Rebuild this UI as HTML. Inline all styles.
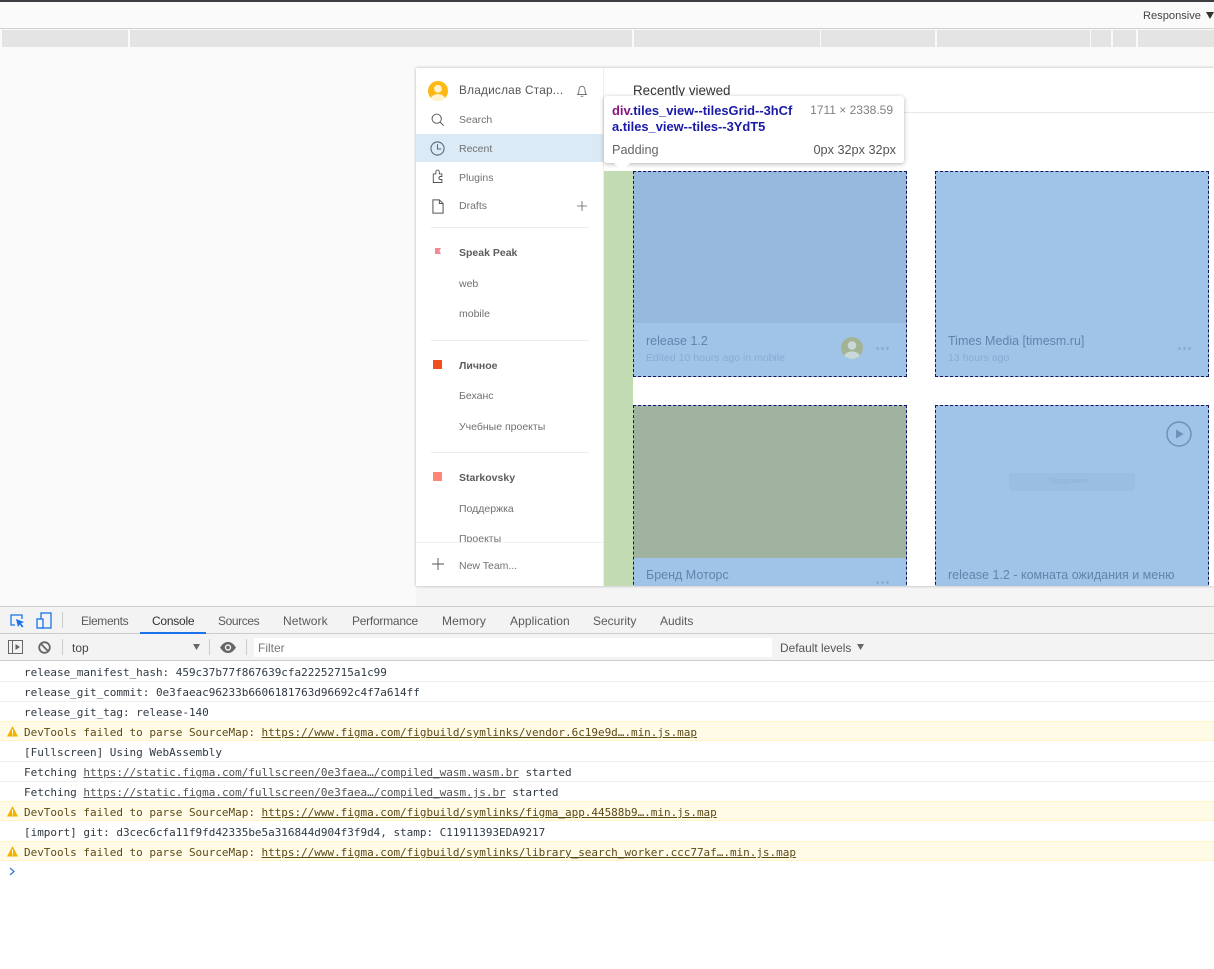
<!DOCTYPE html>
<html><head><meta charset="utf-8"><style>
html,body{margin:0;padding:0;width:1214px;height:969px;overflow:hidden;background:#fff;font-family:"Liberation Sans",sans-serif}
div,span.t,svg{position:absolute}
.t{position:absolute;white-space:nowrap;line-height:16px;height:16px}
.s{font-size:10.5px;color:#717171;left:43px;margin-top:1px}
.b{font-weight:bold;color:#5c5c5c}
.tab{font-size:12px;color:#5a5a5a;top:613px}
.r{left:0;width:1214px;height:19px;border-bottom:1px solid #f0f0f0;background:#fff}
.r .t{left:24px;top:3px;font:11px/16px "DejaVu Sans Mono","Liberation Mono",monospace;letter-spacing:-.025px;color:#303942}
.w{background:#fffbe6;border-bottom:1px solid #fff5c2;border-top:1px solid #fff5c2;height:18px}
.w .t{color:#5c4a1a;top:3px}
u{color:#545454}.w u{color:#5c4a1a}
.m{background:#e4e4e4;top:30px;height:17px}
.ttl{font-size:12.5px;color:#6184ab}
.sub{font-size:10.5px;color:#88abd2}
.d{border:1px dashed #14145a;box-sizing:border-box;background:#a0c4e8;width:274px}
.dots{width:14px;height:3px}
.dots i{position:absolute;width:3px;height:3px;border-radius:50%;background:#8badd4;top:0}
.dots i:nth-child(2){left:5px}.dots i:nth-child(3){left:10px}
</style></head><body>
<div style="left:0;top:0;width:1214px;height:606px;background:#fafafa"></div>
<div style="left:416px;top:586px;width:798px;height:20px;background:#f5f5f5"></div>
<div style="left:0;top:0;width:1214px;height:2px;background:#3e3e42"></div>
<div style="left:0;top:28px;width:1214px;height:1px;background:#cfcfcf"></div>
<span class="t" style="left:1143px;top:8px;font-size:11.1px;color:#444">Responsive</span>
<svg style="left:1206px;top:12px" width="8" height="7"><path d="M0 0H8L4 7Z" fill="#333"/></svg>
<div class="m" style="left:2px;width:126px"></div>
<div class="m" style="left:130px;width:502px"></div>
<div class="m" style="left:634px;width:186px"></div>
<div class="m" style="left:821px;width:114px"></div>
<div class="m" style="left:937px;width:153px"></div>
<div class="m" style="left:1091px;width:20px"></div>
<div class="m" style="left:1113px;width:23px"></div>
<div class="m" style="left:1138px;width:76px"></div>

<div style="left:416px;top:68px;width:798px;height:518px;background:#fff;box-shadow:0 0 3px rgba(0,0,0,.28);overflow:hidden">
  <!-- sidebar (origin 416,68) -->
  <div style="left:187px;top:0;width:1px;height:518px;background:#eee"></div>
  <div style="left:0;top:66px;width:187px;height:28px;background:#daeaf7"></div>
  <svg style="left:12px;top:13px" width="20" height="20" viewBox="0 0 22 22"><defs><clipPath id="c1"><circle cx="11" cy="11" r="11"/></clipPath></defs><circle cx="11" cy="11" r="11" fill="#fdb813"/><g clip-path="url(#c1)"><circle cx="11" cy="8.5" r="4.300" fill="#fff3d0"/><ellipse cx="11" cy="20" rx="8" ry="5.500" fill="#fff3d0"/></g></svg>
  <span class="t" style="left:43px;top:14px;font-size:11.8px;color:#555;letter-spacing:.23px">Владислав Стар...</span>
  <svg style="left:159px;top:16px" width="14" height="14" viewBox="0 0 16 16" fill="none" stroke="#666"><path d="M3 12c1-1 1.500-2 1.500-4.500C4.500 4.500 6 2.500 8 2.500s3.500 2 3.500 5c0 2.500.5 3.500 1.500 4.500Z"/><path d="M6.500 14h3"/></svg>
  <svg style="left:15px;top:45px" width="14" height="14" viewBox="0 0 16 16" fill="none" stroke="#555" stroke-width="1.100"><circle cx="6.500" cy="6.500" r="5.300"/><path d="M10.300 10.300L14.500 14.500"/></svg>
  <span class="t s" style="top:43px">Search</span>
  <svg style="left:14px;top:73px" width="15" height="15" viewBox="0 0 16 16" fill="none" stroke="#5a6670" stroke-width="1.100"><circle cx="8" cy="8" r="7"/><path d="M8 3.500V8.500H12"/></svg>
  <span class="t s" style="top:72px">Recent</span>
  <svg style="left:16px;top:101px" width="12" height="15" viewBox="0 0 14 17" fill="none" stroke="#555" stroke-width="1.100"><path d="M1.500 15.500V5.500H4.500V3a2 2 0 0 1 4 0V5.500H11.500V8.500H9.500a1.800 1.800 0 0 0 0 3.500H11.500V15.500Z"/></svg>
  <span class="t s" style="top:101px">Plugins</span>
  <svg style="left:16px;top:131px" width="12" height="15" viewBox="0 0 13 16" fill="none" stroke="#555" stroke-width="1.100"><path d="M1 .8H8L12 4.800V15.200H1Z"/><path d="M8 .8V4.800H12"/></svg>
  <span class="t s" style="top:129px">Drafts</span>
  <svg style="left:161px;top:133px" width="10" height="10" viewBox="0 0 12 12" stroke="#666"><path d="M6 0V12M0 6H12"/></svg>
  <div style="left:15px;top:159px;width:158px;height:1px;background:#ececec"></div>

  <svg style="left:19px;top:180px" width="6" height="6" viewBox="0 0 6 6"><path d="M0 0H6L4.500 3L6 6H0Z" fill="#f08a96"/></svg>
  <span class="t s b" style="top:176px">Speak Peak</span>
  <span class="t s" style="top:207px">web</span>
  <span class="t s" style="top:237px">mobile</span>
  <div style="left:15px;top:272px;width:158px;height:1px;background:#ececec"></div>

  <div style="left:17px;top:292px;width:9px;height:9px;background:#f24e1e"></div>
  <span class="t s b" style="top:289px">Личное</span>
  <span class="t s" style="top:319px">Беханс</span>
  <span class="t s" style="top:350px">Учебные проекты</span>
  <div style="left:15px;top:384px;width:158px;height:1px;background:#ececec"></div>

  <div style="left:17px;top:404px;width:9px;height:9px;background:#ff8577"></div>
  <span class="t s b" style="top:401px">Starkovsky</span>
  <span class="t s" style="top:432px">Поддержка</span>
  <span class="t s" style="top:462px">Проекты</span>
  <div style="left:0;top:474px;width:187px;height:44px;background:#fff;border-top:1px solid #f0f0f0"></div>
  <svg style="left:16px;top:490px" width="12" height="12" viewBox="0 0 13 13" stroke="#555"><path d="M6.500 0V13M0 6.500H13"/></svg>
  <span class="t s" style="top:489px">New Team...</span>

  <!-- main -->
  <span class="t" style="left:217px;top:15px;font-size:13.4px;color:#333">Recently viewed</span>
  <div style="left:188px;top:44px;width:610px;height:1px;background:#e8e8e8"></div>
  <div style="left:188px;top:103px;width:29px;height:415px;background:#c3dbb3"></div>

  <div class="d" style="left:217px;top:103px;height:206px">
    <div style="left:0;top:0;width:272px;height:151px;background:#97b9dd"></div>
    <span class="t ttl" style="left:12px;top:161px">release 1.2</span>
    <span class="t sub" style="left:12px;top:178px">Edited 10 hours ago in mobile</span>
    <svg style="left:207px;top:165px" width="22" height="22" viewBox="0 0 22 22"><defs><clipPath id="c2"><circle cx="11" cy="11" r="11"/></clipPath></defs><circle cx="11" cy="11" r="11" fill="#a3b494"/><g clip-path="url(#c2)"><circle cx="11" cy="8.500" r="4.300" fill="#c9d8d8"/><ellipse cx="11" cy="20" rx="8" ry="5.500" fill="#c9d8d8"/></g></svg>
    <div class="dots" style="left:242px;top:175px"><i></i><i></i><i></i></div>
  </div>
  <div class="d" style="left:519px;top:103px;height:206px">
    <span class="t ttl" style="left:12px;top:161px">Times Media [timesm.ru]</span>
    <span class="t sub" style="left:12px;top:178px">13 hours ago</span>
    <div class="dots" style="left:242px;top:175px"><i></i><i></i><i></i></div>
  </div>
  <div class="d" style="left:217px;top:337px;height:200px">
    <div style="left:0;top:0;width:272px;height:152px;background:#a0b2a0"></div>
    <span class="t ttl" style="left:12px;top:161px">Бренд Моторс</span>
    <div class="dots" style="left:242px;top:175px"><i></i><i></i><i></i></div>
  </div>
  <div class="d" style="left:519px;top:337px;height:200px">
    <svg style="left:230px;top:15px" width="26" height="26" viewBox="0 0 26 26"><circle cx="13" cy="13" r="12" fill="none" stroke="#6f90b8" stroke-width="1.500"/><path d="M10 8.500L17.500 13L10 17.500Z" fill="#6f90b8"/></svg>
    <div style="left:73px;top:67px;width:126px;height:18px;background:#9abde2;border-radius:2px"></div>
    <span class="t" style="left:113px;top:68px;font-size:7px;color:#8fb2d8">Продолжить</span>
    <span class="t ttl" style="left:12px;top:161px">release 1.2 - комната ожидания и меню</span>
  </div>
</div>

<!-- tooltip -->
<div style="left:604px;top:96px;width:300px;height:67px;background:#fff;border-radius:3px;box-shadow:0 1px 5px rgba(0,0,0,.3)">
  <span class="t" style="left:8px;top:7px;font-size:12.9px;font-weight:bold;color:#881280">div<span style="color:#1a1aa6">.tiles_view--tilesGrid--3hCf</span></span>
  <span class="t" style="left:8px;top:23px;font-size:12.9px;font-weight:bold;color:#1a1aa6">a.tiles_view--tiles--3YdT5</span>
  <span class="t" style="right:11px;top:6px;font-size:12px;color:#808080">1711 × 2338.59</span>
  <span class="t" style="left:8px;top:46px;font-size:12.7px;color:#666">Padding</span>
  <span class="t" style="right:8px;top:46px;font-size:12.7px;color:#555">0px 32px 32px</span>
</div>
<svg style="left:612px;top:163px" width="20" height="9"><path d="M2 0H18L10 8Z" fill="#fff"/></svg>

<!-- devtools -->
<div style="left:0;top:606px;width:1214px;height:1px;background:#ccc"></div>
<div style="left:0;top:607px;width:1214px;height:26px;background:#f3f3f3"></div>
<div style="left:0;top:633px;width:1214px;height:1px;background:#ccc"></div>
<div style="left:0;top:634px;width:1214px;height:26px;background:#f3f3f3"></div>
<div style="left:0;top:660px;width:1214px;height:1px;background:#ccc"></div>
<svg style="left:9px;top:612px" width="17" height="17" viewBox="0 0 17 17" fill="none"><path d="M6 13H2V3H13V7" stroke="#1a73e8" stroke-width="1.300"/><path d="M7 7L15 10L12 11.500L14.500 14.500L13 15.500L10.800 12.500L9 15Z" fill="#1a73e8"/></svg>
<svg style="left:35px;top:612px" width="18" height="18" viewBox="0 0 18 18" fill="none" stroke="#1a73e8" stroke-width="1.300"><rect x="6" y="1" width="10" height="15"/><rect x="2" y="7" width="6" height="9" fill="#f3f3f3"/></svg>
<div style="left:62px;top:612px;width:1px;height:16px;background:#ccc"></div>
<span class="t tab" style="left:81px;letter-spacing:-.35px">Elements</span>
<span class="t tab" style="left:152px;color:#333;letter-spacing:-.25px">Console</span>
<span class="t tab" style="left:218px;letter-spacing:-.4px">Sources</span>
<span class="t tab" style="left:283px;letter-spacing:.1px">Network</span>
<span class="t tab" style="left:352px;letter-spacing:-.25px">Performance</span>
<span class="t tab" style="left:442px;letter-spacing:.1px">Memory</span>
<span class="t tab" style="left:510px;letter-spacing:.1px">Application</span>
<span class="t tab" style="left:593px">Security</span>
<span class="t tab" style="left:660px">Audits</span>
<div style="left:140px;top:632px;width:66px;height:2px;background:#1a73e8"></div>

<svg style="left:8px;top:640px" width="15" height="14" viewBox="0 0 15 14" fill="none" stroke="#666"><rect x=".5" y=".5" width="14" height="13"/><path d="M4.500 1V13"/><path d="M7.500 4L12 7L7.500 10Z" fill="#666" stroke="none"/></svg>
<svg style="left:38px;top:641px" width="13" height="13" viewBox="0 0 13 13" fill="none" stroke="#666" stroke-width="1.800"><circle cx="6.500" cy="6.500" r="5.300"/><path d="M2.800 2.800L10.200 10.200"/></svg>
<div style="left:62px;top:639px;width:1px;height:16px;background:#ccc"></div>
<span class="t" style="left:72px;top:640px;font-size:12px;color:#444">top</span>
<svg style="left:193px;top:644px" width="7" height="6"><path d="M0 0H7L3.500 6Z" fill="#666"/></svg>
<div style="left:209px;top:639px;width:1px;height:16px;background:#ccc"></div>
<svg style="left:220px;top:642px" width="16" height="11" viewBox="0 0 16 11"><path d="M0 5.500C3 1 5.500 0 8 0s5 1 8 5.500C13 10 10.500 11 8 11S3 10 0 5.500Z" fill="#666"/><circle cx="8" cy="5.500" r="3.200" fill="#f3f3f3"/><circle cx="8" cy="5.500" r="1.800" fill="#666"/></svg>
<div style="left:246px;top:639px;width:1px;height:16px;background:#ccc"></div>
<div style="left:254px;top:638px;width:518px;height:19px;background:#fff"></div>
<span class="t" style="left:258px;top:640px;font-size:12px;color:#777">Filter</span>
<span class="t" style="left:780px;top:640px;font-size:11.9px;color:#555">Default levels</span>
<svg style="left:857px;top:644px" width="7" height="6"><path d="M0 0H7L3.500 6Z" fill="#666"/></svg>

<div class="r" style="top:662px"><span class="t">release_manifest_hash: 459c37b77f867639cfa22252715a1c99</span></div>
<div class="r" style="top:682px"><span class="t">release_git_commit: 0e3faeac96233b6606181763d96692c4f7a614ff</span></div>
<div class="r" style="top:702px"><span class="t">release_git_tag: release-140</span></div>
<div class="r w" style="top:721px"><span class="t">DevTools failed to parse SourceMap: <u>https://www.figma.com/figbuild/symlinks/vendor.6c19e9d….min.js.map</u></span></div>
<div class="r" style="top:742px"><span class="t">[Fullscreen] Using WebAssembly</span></div>
<div class="r" style="top:762px"><span class="t">Fetching <u>https://static.figma.com/fullscreen/0e3faea…/compiled_wasm.wasm.br</u> started</span></div>
<div class="r" style="top:782px"><span class="t">Fetching <u>https://static.figma.com/fullscreen/0e3faea…/compiled_wasm.js.br</u> started</span></div>
<div class="r w" style="top:801px"><span class="t">DevTools failed to parse SourceMap: <u>https://www.figma.com/figbuild/symlinks/figma_app.44588b9….min.js.map</u></span></div>
<div class="r" style="top:822px;border-bottom:0"><span class="t">[import] git: d3cec6cfa11f9fd42335be5a316844d904f3f9d4, stamp: C11911393EDA9217</span></div>
<div class="r w" style="top:841px"><span class="t">DevTools failed to parse SourceMap: <u>https://www.figma.com/figbuild/symlinks/library_search_worker.ccc77af….min.js.map</u></span></div>
<svg style="left:7px;top:726px" width="11" height="11" viewBox="0 0 11 11"><path d="M5.500 0L11 10.500H0Z" fill="#f2b300"/><path d="M5 3.500H6V7.500H5ZM5 8.300H6V9.300H5Z" fill="#fff"/></svg>
<svg style="left:7px;top:806px" width="11" height="11" viewBox="0 0 11 11"><path d="M5.500 0L11 10.500H0Z" fill="#f2b300"/><path d="M5 3.500H6V7.500H5ZM5 8.300H6V9.300H5Z" fill="#fff"/></svg>
<svg style="left:7px;top:846px" width="11" height="11" viewBox="0 0 11 11"><path d="M5.500 0L11 10.500H0Z" fill="#f2b300"/><path d="M5 3.500H6V7.500H5ZM5 8.300H6V9.300H5Z" fill="#fff"/></svg>
<svg style="left:9px;top:867px" width="7" height="9" viewBox="0 0 7 9" fill="none" stroke="#3b78d8" stroke-width="1.300"><path d="M1 1L5 4.500L1 8"/></svg>
</body></html>
